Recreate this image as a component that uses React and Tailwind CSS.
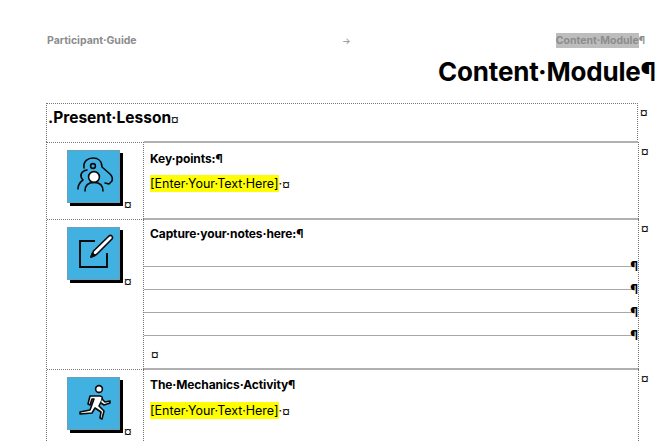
import React from 'react';

const font = "font-['Inter','Liberation_Sans',sans-serif]";

// end-of-cell marker from the word processor
const CellMark = ({ className = '' }) => (
  <span className={`inline-block text-[10px] leading-[10px] font-bold text-black ${className}`}>¤</span>
);

const IconTile = ({ children }) => (
  <div className="w-[53px] h-[53px] bg-[#41b1e1] border border-[#6d9fb5] shadow-[3px_3px_0_0_#000] shrink-0">
    <svg viewBox="0 0 51 51" className="w-full h-full" fill="none" stroke="#0a0a0a" strokeWidth="1.6" strokeLinecap="round" strokeLinejoin="round">
      {children}
    </svg>
  </div>
);

const PersonIcon = () => (
  <IconTile>
    <circle cx="25" cy="15" r="2.4" />
    <path d="M16 17 C15 10 20 7 25 7 C30 7 34 10 34 16 L42 23 C44 25 45 27 44 30 L41 33 L37 32" />
    <circle cx="26" cy="26" r="5.4" fill="#fff" />
    <path d="M17 40 C17 34 21 31.5 26 31.5 C31 31.5 35 34 35 40" />
    <path d="M10 38 C10 34 12 31 15 29 C11 25 13 20 19 19" />
  </IconTile>
);

const NoteIcon = () => (
  <IconTile>
    <path d="M27 13 H12 V39 H39 V25" strokeWidth="1.9" strokeLinecap="butt" strokeLinejoin="miter" />
    <path d="M23 29 L25.5 23 L41 8 C43 6.5 45.5 8.5 44 11 L28.5 26.5 Z" fill="#fff" />
    <path d="M23 29 L24.5 25 L27 27.5 Z" fill="#0a0a0a" />
  </IconTile>
);

const RunnerIcon = () => (
  <IconTile>
    <circle cx="31" cy="11" r="3.4" fill="#fff" />
    <path d="M20 26 L22 18 L32 18 C34 18 35 20 34 22 L31 28 L36 33 L34 41 L32 40 L33 34 L27 30 L24 35 L12 36 L12 34 L22 32 L26 21 L24 21 L22 27 Z" fill="#fff" />
    <path d="M34 21 L37 24 L42 23 L42 25 L36 27 L33 25" fill="#fff" />
  </IconTile>
);

const EnterText = () => (
  <p className="text-[12.5px] leading-[18px]">
    <span className="bg-[#ffff00] py-[1px]">[Enter·Your·Text·Here]</span>·<CellMark />
  </p>
);

const NoteLine = ({ height }) => (
  <div className={`${height} shrink-0 border-b border-[#a8a8a8] flex justify-end items-end mr-[5px]`}>
    <span className="text-[13px] leading-[14px] font-bold -mb-[7px] -mr-[5px]">¶</span>
  </div>
);

const Row = ({ icon, height, children }) => (
  <div className="flex">
    <div className={`flex w-[592px] ${height} border-r border-dotted border-[#777]`}>
      <div className="w-[97px] shrink-0 border-t border-r border-dotted border-[#777] pl-[20px] pt-[7px] flex items-start">
        {icon}
        <CellMark className="ml-[4px] mt-[49px]" />
      </div>
      <div className="flex-1 min-w-0 border-t-2 border-[#b0b0b0] -mt-px">{children}</div>
    </div>
    <CellMark className="ml-[2px] mt-[4px]" />
  </div>
);

export default function App() {
  return (
    <div className={`w-[659px] h-[442px] overflow-hidden bg-white text-black ${font}`}>
      {/* Header */}
      <div className="flex items-center pl-[47px] pr-[14px] pt-[34px] h-[47px] text-[10.5px] font-bold text-[#8c8c8c]">
        <span className="w-[295px]">Participant·Guide</span>
        <span className="font-normal text-[9px]">→</span>
        <span className="ml-auto">
          <span className="bg-[#bdbdbd] py-[1px]">Content·Module</span>¶
        </span>
      </div>
      <h1 className="text-right text-[26px] leading-[34px] font-bold pr-[3px] mt-[8px] tracking-[-0.2px]">Content·Module¶</h1>

      {/* Table */}
      <div className="ml-[46px] mt-[14px]">
        <div className="flex">
          <div className="w-[592px] h-[39px] border-t border-x border-dotted border-[#777] flex items-start pl-[1px] pt-[4px]">
            <p className="text-[15.5px] leading-[20px] font-bold">
              .Present·Lesson<CellMark />
            </p>
          </div>
          <CellMark className="ml-[2px] mt-[4px]" />
        </div>
        <div className="border-l border-dotted border-[#777]">
          <Row icon={<PersonIcon />} height="h-[77px]">
            <div className="pl-[6px] pt-[8px]">
              <p className="text-[12px] leading-[16px] font-bold mb-[8px] tracking-[-0.1px]">Key·points:¶</p>
              <EnterText />
            </div>
          </Row>
          <Row icon={<NoteIcon />} height="h-[150px]">
            <div className="flex flex-col h-full">
              <p className="text-[12px] leading-[16px] font-bold pl-[6px] pt-[6px] h-[46px] shrink-0 tracking-[-0.1px]">Capture·your·notes·here:¶</p>
              <NoteLine height="h-[1px]" />
              <NoteLine height="h-[23px]" />
              <NoteLine height="h-[23px]" />
              <NoteLine height="h-[23px]" />
              <div className="flex pl-[7px] pt-[13px]">
                <CellMark />
              </div>
            </div>
          </Row>
          <Row icon={<RunnerIcon />} height="h-[80px]">
            <div className="pl-[6px] pt-[7px]">
              <p className="text-[12px] leading-[16px] font-bold mb-[9px] tracking-[-0.1px]">The·Mechanics·Activity¶</p>
              <EnterText />
            </div>
          </Row>
        </div>
      </div>
    </div>
  );
}
